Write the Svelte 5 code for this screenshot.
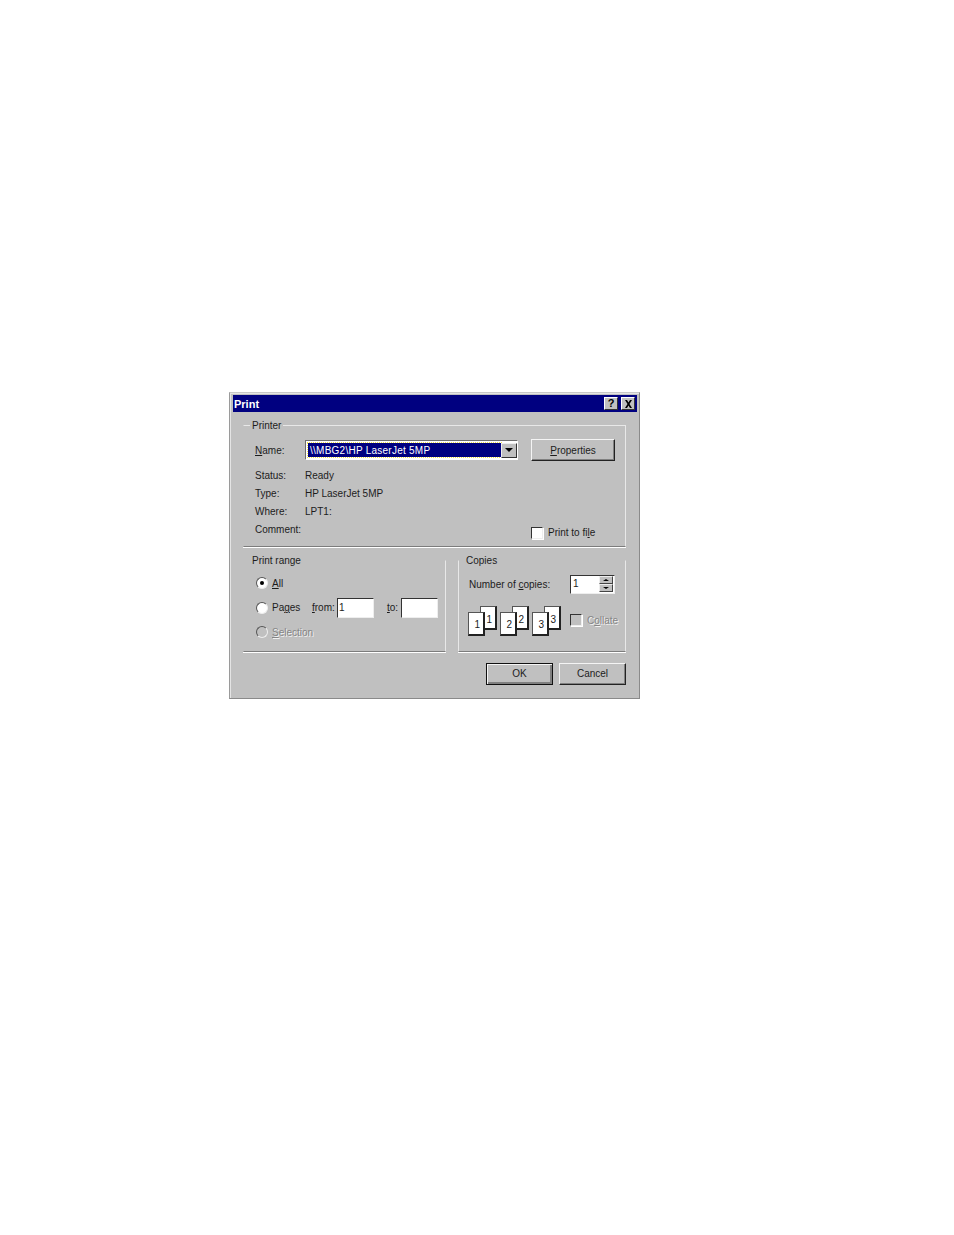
<!-- Print dialog, Windows 9x style -->
<script>
    const info = [
        ['Status:', 'Ready'],
        ['Type:', 'HP LaserJet 5MP'],
        ['Where:', 'LPT1:'],
        ['Comment:', '']
    ];
    const collatePages = [1, 2, 3];
</script>

<div class="dialog">
    <header class="titlebar">
        <span class="title">Print</span>
        <div class="title-btns">
            <button class="cap-btn help">?</button>
            <button class="cap-btn" aria-label="Close">
                <svg width="9" height="8" viewBox="0 0 9 8"><path d="M1 0h2l1.500 2.500L6 0h2L5.500 4 8 8H6L4.500 5.500 3 8H1l2.500-4z" fill="#000"/></svg>
            </button>
        </div>
    </header>

    <div class="body">
        <fieldset class="group printer">
            <legend>Printer</legend>
            <div class="name-row">
                <span class="row-label"><u>N</u>ame:</span>
                <div class="combo">
                    <span class="combo-value">\\MBG2\HP LaserJet 5MP</span>
                    <span class="combo-arrow"><i class="tri down"></i></span>
                </div>
                <button class="btn props"><u>P</u>roperties</button>
            </div>
            <div class="info">
                {#each info as [label, value]}
                    <div class="info-row">
                        <span class="row-label">{label}</span>
                        <span>{value}</span>
                    </div>
                {/each}
                <label class="check print-file"><span class="box"></span><span class="check-text">Print to fi<u>l</u>e</span></label>
            </div>
        </fieldset>

        <div class="lower">
            <fieldset class="group range">
                <legend>Print range</legend>
                <div class="radio-row">
                    <span class="radio on"></span><span class="radio-label"><u>A</u>ll</span>
                </div>
                <div class="radio-row pages">
                    <span class="radio"></span><span class="radio-label">Pa<u>g</u>es</span>
                    <span class="from"><u>f</u>rom:</span>
                    <span class="field">1</span>
                    <span class="to"><u>t</u>o:</span>
                    <span class="field"></span>
                </div>
                <div class="radio-row off">
                    <span class="radio"></span><span class="radio-label disabled"><u>S</u>election</span>
                </div>
            </fieldset>

            <fieldset class="group copies">
                <legend>Copies</legend>
                <div class="count-row">
                    <span class="count-label">Number of <u>c</u>opies:</span>
                    <div class="spinner">
                        <span class="spin-value">1</span>
                        <span class="spin-btns">
                            <span class="spin-btn"><i class="tri up small"></i></span>
                            <span class="spin-btn"><i class="tri down small"></i></span>
                        </span>
                    </div>
                </div>
                <div class="collate-row">
                    <div class="stacks">
                        {#each collatePages as n}
                            <div class="stack">
                                <span class="page back">{n}</span>
                                <span class="page front">{n}</span>
                            </div>
                        {/each}
                    </div>
                    <label class="check collate"><span class="box dim"></span><span class="check-text disabled">C<u>o</u>llate</span></label>
                </div>
            </fieldset>
        </div>

        <div class="actions">
            <button class="btn ok">OK</button>
            <button class="btn">Cancel</button>
        </div>
    </div>
</div>

<style>
    :global(body) {
        background: #fff;
    }

    .dialog {
        box-sizing: border-box;
        width: 411px;
        height: 307px;
        margin: 392px 0 0 229px;
        padding: 2px 2px 0 3px;
        background: #c0c0c0;
        border: 1px solid #8a8a8a;
        border-top-color: #c8c8c8;
        border-left-color: #9a9a9a;
        box-shadow: inset 1px 1px 0 #e4e4e4;
        font: 10px/14px "Liberation Sans", Arial, sans-serif;
        color: #1c1c1c;
    }

    /* title bar */
    .titlebar {
        display: flex;
        justify-content: space-between;
        align-items: center;
        height: 17px;
        padding: 0 2px 0 1px;
        background: #000080;
    }
    .title {
        font-size: 11px;
        font-weight: 700;
        color: #fff;
    }
    .title-btns {
        display: flex;
        gap: 3px;
    }
    .cap-btn {
        display: flex;
        align-items: center;
        justify-content: center;
        box-sizing: border-box;
        width: 14px;
        height: 13px;
        padding: 0;
        background: #c0c0c0;
        border: 1px solid;
        border-color: #fff #333 #333 #fff;
        font: 700 11px/11px "Liberation Sans", Arial, sans-serif;
        color: #000;
    }

    .body {
        padding: 0 11px 0 10px;
    }

    /* group boxes */
    .group {
        box-sizing: border-box;
        margin: 0;
        min-width: 0;
        padding: 0;
        border: 1px solid #e8e8e8;
        border-bottom-color: #7c7c7c;
        box-shadow: 0 1px 0 #fff;
    }
    .group legend {
        margin-left: -5px;
        padding: 1px 2px 0;
        line-height: 14px;
    }

    .printer {
        height: 129px;
        margin-top: 6px;
        padding: 0 0 0 11px;
        border-left-color: #c0c0c0;
    }
    .name-row {
        display: flex;
        align-items: center;
        height: 24px;
        margin-top: 5px;
    }
    .row-label {
        flex: none;
        width: 50px;
    }
    .name-row .row-label {
        padding-top: 1px;
    }

    .combo {
        display: flex;
        align-items: center;
        box-sizing: border-box;
        width: 213px;
        height: 20px;
        padding: 2px 0 2px 2px;
        background: #fff;
        border: 1px solid;
        border-color: #6e6e6e #fff #fff #6e6e6e;
    }
    .combo-value {
        flex: 1;
        box-sizing: border-box;
        height: 14px;
        padding-left: 2px;
        background: #000080;
        outline: 1px dotted #f2e24a;
        color: #fff;
        line-height: 15px;
        letter-spacing: 0.25px;
    }
    .combo-arrow {
        display: flex;
        align-items: center;
        justify-content: center;
        box-sizing: border-box;
        width: 16px;
        height: 15px;
        background: #c0c0c0;
        border: 1px solid;
        border-color: #eee #333 #333 #eee;
    }

    .tri {
        display: block;
        width: 0;
        height: 0;
        border-left: 4px solid transparent;
        border-right: 4px solid transparent;
    }
    .tri.down {
        border-top: 4px solid #000;
    }
    .tri.up {
        border-bottom: 4px solid #000;
    }
    .tri.small {
        border-left-width: 3px;
        border-right-width: 3px;
        border-top-width: 2px;
        border-bottom-width: 2px;
    }

    .btn {
        box-sizing: border-box;
        width: 67px;
        height: 22px;
        padding: 0;
        background: #c0c0c0;
        border: 1px solid;
        border-color: #f4f4f4 #222 #222 #f4f4f4;
        box-shadow: inset -1px -1px 0 #808080;
        font: inherit;
        color: inherit;
    }
    .props {
        width: 84px;
        margin-left: 13px;
        padding-top: 1px;
    }
    .ok {
        border: 1px solid #111;
        box-shadow: inset 1px 1px 0 #f4f4f4, inset -2px -2px 0 #808080;
    }

    .info {
        position: relative;
        margin-top: 5px;
    }
    .info-row {
        display: flex;
        height: 18px;
        line-height: 18px;
    }

    .check {
        display: flex;
        align-items: center;
        gap: 5px;
    }
    .check-text {
        padding-top: 1px;
    }
    .print-file {
        position: absolute;
        left: 276px;
        bottom: -1px;
    }
    .box {
        box-sizing: border-box;
        width: 12px;
        height: 12px;
        background: #fff;
        border: 1px solid;
        border-color: #333 #eee #eee #333;
        box-shadow: 1px 1px 0 #fff;
    }
    .box.dim {
        background: #c0c0c0;
    }
    .disabled {
        color: #858585;
        text-shadow: 1px 1px 0 #f2f2f2;
    }

    /* lower row */
    .lower {
        display: grid;
        grid-template-columns: 203px 168px;
        justify-content: space-between;
        margin-top: 6px;
    }
    .range,
    .copies {
        height: 99px;
        border-top-color: #c0c0c0;
    }
    .range {
        padding-left: 12px;
        border-left-color: #c0c0c0;
    }
    .range legend {
        margin-left: -6px;
    }
    .copies {
        padding-left: 10px;
    }
    .copies legend {
        margin-left: -5px;
    }

    .radio-row {
        display: flex;
        align-items: center;
        height: 24.500px;
    }
    .radio-row:first-of-type {
        margin-top: 3px;
    }
    .radio {
        box-sizing: border-box;
        display: flex;
        align-items: center;
        justify-content: center;
        flex: none;
        width: 12px;
        height: 12px;
        border-radius: 50%;
        background: #fff;
        border: 1px solid;
        border-color: #555 #eee #eee #555;
    }
    .radio.on::after {
        content: '';
        width: 4px;
        height: 4px;
        border-radius: 50%;
        background: #000;
    }
    .off .radio {
        background: #c0c0c0;
    }
    .radio-label {
        flex: none;
        width: 40px;
        margin-left: 4px;
        padding-top: 1px;
    }
    .from {
        flex: none;
        width: 25px;
        padding-top: 1px;
    }
    .field {
        display: block;
        flex: none;
        box-sizing: border-box;
        width: 37px;
        height: 20px;
        padding-left: 1px;
        background: #fff;
        border: 1px solid;
        border-color: #333 #eee #eee #333;
        line-height: 17px;
    }
    .to {
        flex: none;
        width: 14px;
        margin-left: 13px;
        padding-top: 1px;
    }

    /* copies */
    .count-row {
        display: flex;
        justify-content: space-between;
        align-items: center;
        height: 20px;
        margin: 6px 10px 0 0;
    }
    .count-label {
        padding-top: 1px;
    }
    .spinner {
        display: flex;
        align-items: center;
        box-sizing: border-box;
        width: 45px;
        height: 19px;
        padding-right: 1px;
        background: #fff;
        border: 1px solid;
        border-color: #333 #eee #eee #333;
    }
    .spin-value {
        flex: 1;
        padding-left: 2px;
    }
    .spin-btns {
        display: flex;
        flex-direction: column;
    }
    .spin-btn {
        display: flex;
        align-items: center;
        justify-content: center;
        box-sizing: border-box;
        width: 14px;
        height: 8px;
        background: #c0c0c0;
        border: 1px solid;
        border-color: #eee #444 #444 #eee;
    }

    .collate-row {
        display: flex;
        align-items: center;
        margin: 12px 0 0 -1px;
    }
    .stacks {
        display: flex;
        gap: 3px;
    }
    .stack {
        position: relative;
        width: 29px;
        height: 30px;
    }
    .page {
        position: absolute;
        box-sizing: border-box;
        width: 17px;
        height: 24px;
        padding: 6px 3px 0 0;
        background: #fff;
        border-style: solid;
        border-width: 1px 2px 2px 1px;
        border-color: #555 #222 #222 #555;
        text-align: right;
        font-size: 10px;
        line-height: 12px;
    }
    .back {
        top: 0;
        right: 0;
        padding-top: 7px;
    }
    .front {
        bottom: 0;
        left: 0;
    }
    .collate {
        margin-left: 9px;
        margin-bottom: 2px;
    }

    .actions {
        display: flex;
        justify-content: flex-end;
        gap: 6px;
        margin-top: 11px;
    }
</style>
